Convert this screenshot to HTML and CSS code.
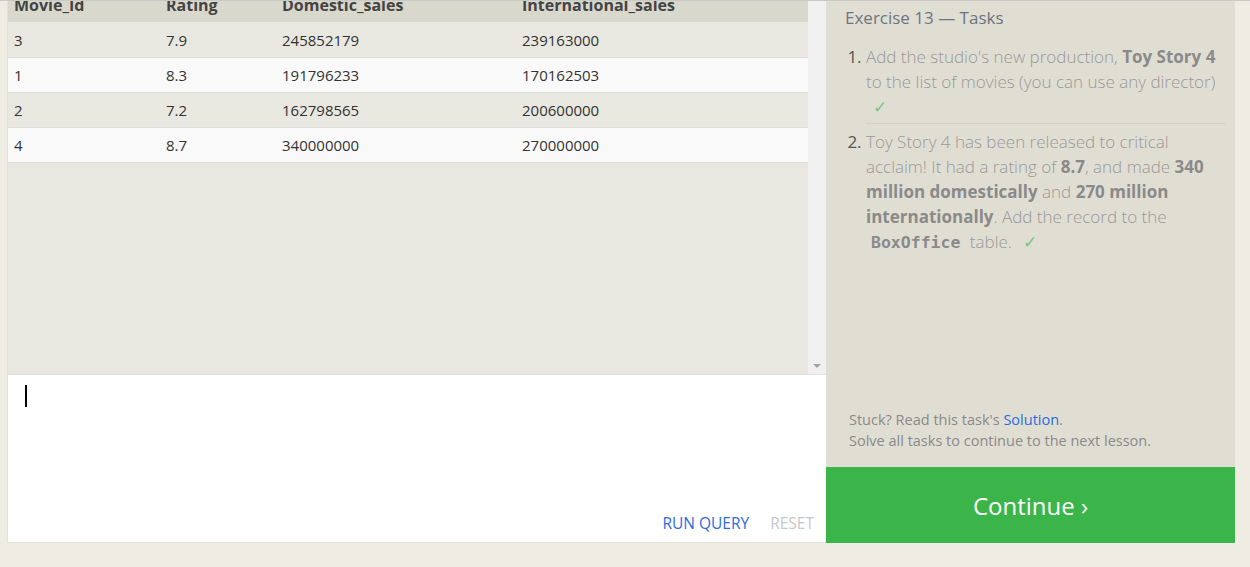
FILE: index.html
```html
<!DOCTYPE html>
<html>
<head>
<meta charset="utf-8">
<link rel="stylesheet" href="styles.css">
</head>
<body>
<div class="page">
  <div class="left">
    <div class="results">
      <div class="table-wrap">
        <table class="grid">
          <thead>
            <tr><th class="c1">Movie_Id</th><th class="c2">Rating</th><th class="c3">Domestic_sales</th><th class="c4">International_sales</th></tr>
          </thead>
          <tbody>
            <tr><td>3</td><td>7.9</td><td>245852179</td><td>239163000</td></tr>
            <tr><td>1</td><td>8.3</td><td>191796233</td><td>170162503</td></tr>
            <tr><td>2</td><td>7.2</td><td>162798565</td><td>200600000</td></tr>
            <tr><td>4</td><td>8.7</td><td>340000000</td><td>270000000</td></tr>
          </tbody>
        </table>
      </div>
      <div class="scrollbar"><span class="arrow"></span></div>
    </div>
    <div class="editor">
      <div class="cursor"></div>
      <div class="actions">
        <span class="run">RUN QUERY</span>
        <span class="reset">RESET</span>
      </div>
    </div>
  </div>
  <div class="right">
    <div class="tasks">
      <h2 class="title">Exercise 13 — Tasks</h2>
      <ol class="list">
        <li>Add the studio's new production, <b>Toy Story 4</b> to the list of movies (you can use any director) <span class="check">✓</span></li>
        <li>Toy Story 4 has been released to critical acclaim! It had a rating of <b>8.7</b>, and made <b>340 million domestically</b> and <b>270 million internationally</b>. Add the record to the <code>BoxOffice</code> table. <span class="check">✓</span></li>
      </ol>
      <div class="help">
        <p>Stuck? Read this task's <a class="link">Solution</a>.</p>
        <p>Solve all tasks to continue to the next lesson.</p>
      </div>
    </div>
    <div class="continue">Continue ›</div>
  </div>
</div>
</body>
</html>
```

FILE: styles.css
```css
html, body {
  margin: 0;
  padding: 0;
}
body {
  background: #efece4;
  border-top: 1px solid #c9c9c6;
  font-family: "Open Sans", "Liberation Sans", sans-serif;
  height: 566px;
  overflow: hidden;
}
.page {
  display: flex;
  padding-left: 7px;
  width: 1228px;
}
.left {
  width: 819px;
  display: flex;
  flex-direction: column;
}
.results {
  height: 373px;
  display: flex;
  background: #e9e8e0;
  border-left: 1px solid #e3e1d8;
}
.table-wrap {
  width: 800px;
  overflow: hidden;
}
.grid {
  width: 800px;
  border-collapse: collapse;
  margin-top: -13px;
}
.grid th {
  background: #d9d8cc;
  color: #444;
  font-size: 16px;
  font-weight: 700;
  text-align: left;
  height: 34px;
  padding: 0 0 0 6px;
}
.grid td {
  color: #333;
  font-size: 15px;
  height: 34px;
  padding: 0 0 0 6px;
  border-bottom: 1px solid #dcdcd8;
}
.grid tbody tr:nth-child(odd) td { background: #e9e8e0; }
.grid tbody tr:nth-child(even) td { background: #f9f9f9; }
.grid tbody tr:first-child td { height: 35px; }
.c1 { width: 146px; }
.c2 { width: 110px; }
.c3 { width: 234px; }
.scrollbar {
  width: 18px;
  background: #f0f0f0;
  display: flex;
  align-items: flex-end;
  justify-content: center;
  padding-bottom: 6px;
  box-sizing: border-box;
}
.arrow {
  width: 0;
  height: 0;
  border-left: 4px solid transparent;
  border-right: 4px solid transparent;
  border-top: 4px solid #a3a3a3;
}
.editor {
  height: 169px;
  background: #fff;
  border: 1px solid #e3e1d8;
  border-right: none;
  box-sizing: border-box;
  display: flex;
  flex-direction: column;
  justify-content: space-between;
  padding: 10px 0 0 17px;
}
.cursor {
  width: 2px;
  height: 22px;
  background: #000;
}
.actions {
  display: flex;
  justify-content: flex-end;
  gap: 21px;
  font-size: 15.5px;
  padding: 0 12px 8px 0;
}
.run { color: #2d6be0; }
.reset { color: #c8c8c8; }
.right {
  width: 409px;
  display: flex;
  flex-direction: column;
}
.tasks {
  height: 466px;
  background: #e0ded3;
  box-sizing: border-box;
  padding: 4px 9px 0 19px;
  display: flex;
  flex-direction: column;
}
.title {
  margin: 0;
  font-size: 17px;
  font-weight: 400;
  color: #6d7580;
  line-height: 26px;
}
.list {
  margin: 13px 0 0 0;
  padding: 0 0 0 21px;
  color: #999;
  font-size: 17px;
  font-weight: 300;
  line-height: 25px;
}
.list li {
  padding-bottom: 4px;
}
.list li + li {
  border-top: 1px solid #d3d1c7;
  padding-top: 5px;
}
.list li::marker {
  color: #555;
  font-weight: 400;
}
.list b {
  color: #8a8a8a;
  font-weight: 700;
}
.list code {
  font-family: "DejaVu Sans Mono", "Liberation Mono", monospace;
  font-weight: 700;
  font-size: 16.5px;
  color: #8a8a8a;
  padding: 0 5px;
}
.check {
  color: #78c785;
  padding-left: 7px;
}
.help {
  margin-top: auto;
  padding: 0 0 16px 4px;
  font-size: 14.5px;
  color: #8a8a8a;
  line-height: 21px;
}
.help p { margin: 0; }
.link { color: #2d6be0; }
.continue {
  height: 76px;
  background: #3bb54a;
  color: #fff;
  font-size: 24px;
  display: flex;
  align-items: center;
  justify-content: center;
}
```
